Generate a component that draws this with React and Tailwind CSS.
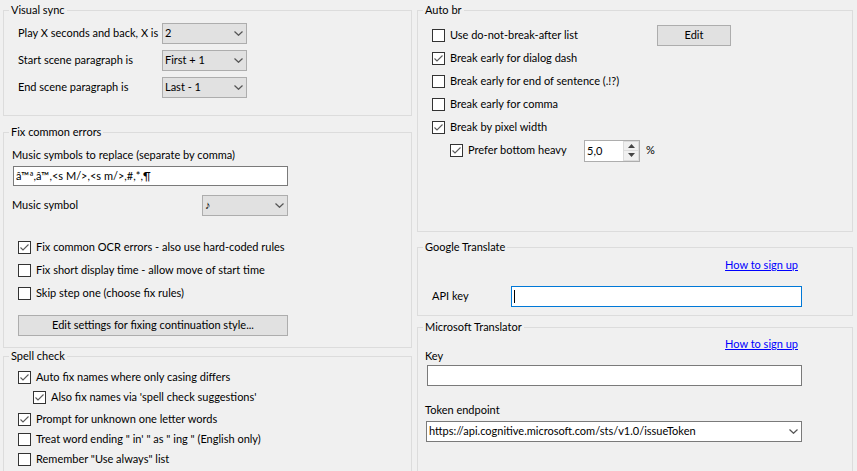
const FONT = "font-['Lato','Liberation_Sans',sans-serif]";

function GroupBox({ title, className = "", children }) {
  return (
    <fieldset className={`border border-[#dcdcdc] min-w-0 shrink-0 ${className}`}>
      <legend className="ml-[5px] px-[2px] leading-[16px]">{title}</legend>
      {children}
    </fieldset>
  );
}

function Check({ checked }) {
  return (
    <span className="w-[13px] h-[13px] border border-[#333333] bg-white flex items-center justify-center shrink-0">
      {checked && (
        <svg width="11" height="11" viewBox="0 0 11 11">
          <path d="M1.5 5.5 L4 8 L9.5 2.5" stroke="#5a5a5a" strokeWidth="1.1" fill="none" />
        </svg>
      )}
    </span>
  );
}

function CheckRow({ checked, label, className = "" }) {
  return (
    <div className={`flex items-center gap-[5px] h-[17px] shrink-0 ${className}`}>
      <Check checked={checked} />
      <span className="whitespace-nowrap">{label}</span>
    </div>
  );
}

function Chevron() {
  return (
    <svg width="9" height="5" viewBox="0 0 9 5" className="shrink-0">
      <path d="M0.5 0.5 L4.5 4.3 L8.5 0.5" stroke="#555555" strokeWidth="1.2" fill="none" />
    </svg>
  );
}

function Combo({ value, className = "", white = false }) {
  return (
    <div
      className={`h-[21px] border flex items-center pl-[2px] pr-[3px] shrink-0 ${
        white ? "bg-white border-[#7a7a7a]" : "bg-[#e1e1e1] border-[#adadad]"
      } ${className}`}
    >
      <span className="flex-1 whitespace-nowrap overflow-hidden">{value}</span>
      <Chevron />
    </div>
  );
}

function Link() {
  return <span className="text-[#0000ff] underline leading-[16px]">How to sign up</span>;
}

export default function App() {
  return (
    <div className={`w-[857px] h-[471px] bg-[#f0f0f0] overflow-hidden flex text-[11px] text-black ${FONT}`}>
      {/* left column */}
      <div className="ml-[3px] w-[409px] pt-[2px] flex flex-col shrink-0">
        <GroupBox title="Visual sync" className="h-[114px]">
          <div className="pt-[5px] pl-[14px] flex flex-col gap-[6px]">
            {[
              ["Play X seconds and back, X is", "2"],
              ["Start scene paragraph is", "First + 1"],
              ["End scene paragraph is", "Last - 1"],
            ].map(([label, value]) => (
              <div key={label} className="flex items-center h-[21px]">
                <span className="w-[144px] whitespace-nowrap">{label}</span>
                <Combo value={value} className="w-[85px]" />
              </div>
            ))}
          </div>
        </GroupBox>

        <GroupBox title="Fix common errors" className="h-[224px] mt-[8px]">
          <div className="px-[8px] flex flex-col">
            <div className="mt-[7px] leading-[16px]">Music symbols to replace (separate by comma)</div>
            <div className="mt-[3px] ml-[1px] w-[275px] h-[20px] border border-[#7a7a7a] bg-white flex items-center px-[2px] whitespace-nowrap">
              â™ª,â™,&lt;s M/&gt;,&lt;s m/&gt;,#,*,¶
            </div>
            <div className="mt-[9px] flex items-center h-[21px]">
              <span className="w-[190px]">Music symbol</span>
              <Combo value={<span className="text-[11px]">♪</span>} className="w-[86px]" />
            </div>
            <div className="mt-[23px] pl-[6px] flex flex-col gap-[6px]">
              <CheckRow checked label="Fix common OCR errors - also use hard-coded rules" />
              <CheckRow label="Fix short display time - allow move of start time" />
              <CheckRow label="Skip step one (choose fix rules)" />
            </div>
            <button className="mt-[13px] ml-[6px] w-[270px] h-[21px] border border-[#adadad] bg-[#e1e1e1] text-center">
              Edit settings for fixing continuation style...
            </button>
          </div>
        </GroupBox>

        <GroupBox title="Spell check" className="h-[160px]">
          <div className="pl-[14px] flex flex-col">
            <CheckRow checked className="mt-[5px]" label="Auto fix names where only casing differs" />
            <CheckRow checked className="mt-[3px] ml-[15px]" label="Also fix names via 'spell check suggestions'" />
            <CheckRow checked className="mt-[5px]" label="Prompt for unknown one letter words" />
            <CheckRow className="mt-[3px]" label={`Treat word ending " in' " as " ing " (English only)`} />
            <CheckRow className="mt-[3px]" label={`Remember "Use always" list`} />
          </div>
        </GroupBox>
      </div>

      {/* right column */}
      <div className="ml-[5px] w-[436px] pt-[2px] flex flex-col shrink-0">
        <GroupBox title="Auto br" className="h-[230px]">
          <div className="pt-[9px] pl-[14px] flex flex-col gap-[6px]">
            <div className="flex items-center h-[17px]">
              <div className="w-[225px]">
                <CheckRow label="Use do-not-break-after list" />
              </div>
              <button className="w-[74px] h-[21px] border border-[#adadad] bg-[#e1e1e1] shrink-0">Edit</button>
            </div>
            <CheckRow checked label="Break early for dialog dash" />
            <CheckRow label="Break early for end of sentence (.!?)" />
            <CheckRow label="Break early for comma" />
            <CheckRow checked label="Break by pixel width" />
            <div className="flex items-center h-[17px] ml-[18px]">
              <div className="w-[134px]">
                <CheckRow checked label="Prefer bottom heavy" />
              </div>
              <div className="w-[56px] h-[22px] border border-[#adadad] bg-white flex">
                <span className="flex-1 pl-[2px] leading-[20px]">5,0</span>
                <div className="w-[16px] flex flex-col">
                  <div className="flex-1 bg-[#f0f0f0] border border-[#dcdcdc] flex items-center justify-center">
                    <svg width="7" height="4" viewBox="0 0 7 4"><path d="M0 4 L3.5 0 L7 4 Z" fill="#444" /></svg>
                  </div>
                  <div className="flex-1 bg-[#f0f0f0] border border-t-0 border-[#dcdcdc] flex items-center justify-center">
                    <svg width="7" height="4" viewBox="0 0 7 4"><path d="M0 0 L3.5 4 L7 0 Z" fill="#444" /></svg>
                  </div>
                </div>
              </div>
              <span className="ml-[6px]">%</span>
            </div>
          </div>
        </GroupBox>

        <GroupBox title="Google Translate" className="h-[77px] mt-[7px]">
          <div className="flex flex-col">
            <div className="mt-[2px] h-[16px] flex justify-end pr-[54px]">
              <Link />
            </div>
            <div className="mt-[13px] pl-[14px] flex items-center h-[21px]">
              <span className="w-[79px]">API key</span>
              <div className="w-[291px] h-[21px] border border-[#0078d7] bg-white flex items-center pl-[2px]">
                <span className="w-[1px] h-[13px] bg-black" />
              </div>
            </div>
          </div>
        </GroupBox>

        <GroupBox title="Microsoft Translator" className="h-[160px] mt-[3px]">
          <div className="flex flex-col pl-[7px]">
            <div className="mt-[1px] h-[16px] flex justify-end pr-[54px]">
              <Link />
            </div>
            <div className="-mt-[4px] leading-[16px]">Key</div>
            <div className="mt-[1px] ml-[2px] w-[375px] h-[21px] border border-[#7a7a7a] bg-white" />
            <div className="mt-[16px] leading-[16px]">Token endpoint</div>
            <Combo white value="https://api.cognitive.microsoft.com/sts/v1.0/issueToken" className="mt-[3px] ml-[1px] w-[376px]" />
          </div>
        </GroupBox>
      </div>
    </div>
  );
}
